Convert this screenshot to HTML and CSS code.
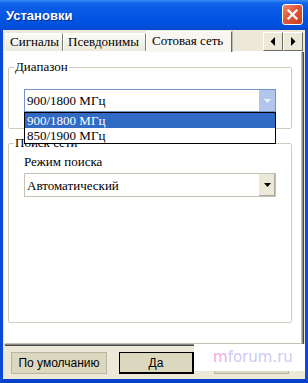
FILE: index.html
```html
<!DOCTYPE html>
<html>
<head>
<meta charset="utf-8">
<link rel="stylesheet" href="styles.css">
</head>
<body>
<div class="window">
  <div class="titlebar">
    <span class="title">Установки</span>
    <span class="close"><svg width="13" height="13" viewBox="0 0 13 13"><path d="M2.5 2.5 L10.5 10.5 M10.5 2.5 L2.5 10.5" stroke="#fff" stroke-width="2.2" stroke-linecap="square"/></svg></span>
  </div>
  <div class="frame">
    <div class="tabs">
      <div class="tab t1">Сигналы</div>
      <div class="tab t2">Псевдонимы</div>
      <div class="tab sel">Сотовая сеть</div>
      <div class="scroll">
        <div class="sbtn"><svg width="6" height="9" viewBox="0 0 6 9"><path d="M5 0 L5 9 L0.5 4.5 Z" fill="#000"/></svg></div>
        <div class="sbtn"><svg width="6" height="9" viewBox="0 0 6 9"><path d="M1 0 L1 9 L5.5 4.5 Z" fill="#000"/></svg></div>
      </div>
    </div>
    <div class="panel">
      <div class="group g1">
        <span class="legend">Диапазон</span>
        <div class="combo focused">
          <span class="value">900/1800 МГц</span>
          <span class="drop blue"><svg width="7" height="4" viewBox="0 0 7 4"><path d="M0 0 L7 0 L3.5 4 Z" fill="#eef2fa"/></svg></span>
          <div class="list">
            <div class="item selected">900/1800 МГц</div>
            <div class="item">850/1900 МГц</div>
          </div>
        </div>
      </div>
      <div class="group g2">
        <span class="legend">Поиск сети</span>
        <div class="label">Режим поиска</div>
        <div class="combo plain">
          <span class="value">Автоматический</span>
          <span class="drop beige"><svg width="7" height="4" viewBox="0 0 7 4"><path d="M0 0 L7 0 L3.5 4 Z" fill="#000"/></svg></span>
        </div>
      </div>
    </div>
    <div class="buttons">
      <div class="btn b1">По умолчанию</div>
      <div class="btn b2">Да</div>
      <div class="btn b3"></div>
    </div>
    <div class="watermark"><span class="wm-m">m</span>forum.ru</div>
  </div>
</div>
</body>
</html>
```
FILE: styles.css
```css
html, body {
  margin: 0;
  padding: 0;
  background: #ffffff;
}
.window {
  width: 308px;
  height: 383px;
  display: flex;
  flex-direction: column;
  overflow: hidden;
}
.titlebar {
  height: 30px;
  flex: none;
  display: flex;
  align-items: center;
  padding-left: 6px;
  position: relative;
  background: linear-gradient(to bottom, #3b8cf3 0px, #1266ea 3px, #0a5ce6 8px, #0055e3 18px, #0050dc 26px, #0a48cc 30px);
}
.title {
  font-family: "Liberation Sans", Arial, sans-serif;
  font-weight: bold;
  font-size: 13px;
  color: #ffffff;
  text-shadow: 1px 1px 0 #0a2a8c;
  margin-top: 1px;
}
.close {
  position: absolute;
  left: 282px;
  top: 4px;
  width: 21px;
  height: 21px;
  box-sizing: border-box;
  border: 1px solid #ffffff;
  border-radius: 3px;
  background: linear-gradient(135deg, #ee8a6c 0%, #e0583a 45%, #c8401e 100%);
  display: flex;
  align-items: center;
  justify-content: center;
}
.frame {
  flex: 1;
  position: relative;
  background: #ece9d8;
  border-left: 3px solid #0c4ad8;
  border-right: 3px solid #0c4ad8;
  border-bottom: 4px solid #0a3fcc;
  padding-left: 1px;
  display: flex;
  flex-direction: column;
}
.tabs {
  width: 299px;
  height: 21px;
  display: flex;
  align-items: flex-end;
  padding-left: 1px;
  box-sizing: border-box;
  position: relative;
  z-index: 2;
}
.tab {
  box-sizing: border-box;
  height: 18px;
  font-family: "Liberation Serif", "Times New Roman", serif;
  font-size: 13px;
  line-height: 15px;
  color: #000;
  padding-left: 4px;
  background: linear-gradient(to bottom, #fbfbf8, #ebe9dc);
  border-top: 1px solid #ffffff;
  border-left: 1px solid #ffffff;
  border-right: 1px solid #7c7c74;
  box-shadow: 1px 0 0 #bdbab0;
}
.t1 { width: 58px; }
.t2 { width: 83px; }
.sel {
  width: 86px;
  height: 21px;
  margin-bottom: -1px;
  padding-left: 5px;
  padding-top: 1px;
  background: #f7f6f0;
  border-right: 1px solid #6a6a64;
}
.scroll {
  margin-left: auto;
  display: flex;
  margin-bottom: 0px;
}
.sbtn {
  width: 20px;
  height: 19px;
  box-sizing: border-box;
  background: #ece9d8;
  border-top: 1px solid #ffffff;
  border-left: 1px solid #ffffff;
  border-right: 1px solid #6b6b64;
  border-bottom: 1px solid #6b6b64;
  display: flex;
  align-items: center;
  justify-content: center;
}
.panel {
  width: 299px;
  height: 294px;
  box-sizing: border-box;
  background: #ffffff;
  border-top: 1px solid #ffffff;
  border-left: 1px solid #ffffff;
  border-right: 1px solid #8a8a84;
  border-bottom: 1px solid #8a8a84;
  box-shadow: 1px 1px 0 #4a4a44, inset -1px -1px 0 #c4c1b4;
  padding: 15px 0 0 3px;
  display: flex;
  flex-direction: column;
  position: relative;
  z-index: 1;
}
.group {
  width: 284px;
  box-sizing: border-box;
  border: 1px solid #cfccbe;
  border-radius: 2px;
  display: flex;
  flex-direction: column;
  padding-left: 15px;
}
.g1 { height: 62px; position: relative; z-index: 3; }
.g2 { height: 180px; margin-top: 14px; }
.legend {
  align-self: flex-start;
  margin: -9px 0 0 -10px;
  padding: 0 1px;
  height: 15px;
  background: #ffffff;
  font-family: "Liberation Serif", "Times New Roman", serif;
  font-size: 13px;
  line-height: 15px;
  color: #000;
}
.label {
  margin-top: 4px;
  font-family: "Liberation Serif", "Times New Roman", serif;
  font-size: 13px;
  line-height: 15px;
  color: #000;
}
.combo {
  width: 252px;
  box-sizing: border-box;
  background: #ffffff;
  display: flex;
  align-items: stretch;
  position: relative;
  font-family: "Liberation Serif", "Times New Roman", serif;
  font-size: 13px;
  color: #000;
}
.focused {
  height: 23px;
  margin-top: 15px;
  border: 1px solid #7393c8;
}
.plain {
  height: 24px;
  margin-top: 4px;
  border: 1px solid #c5c2b6;
}
.value {
  flex: 1;
  padding-left: 2px;
  display: flex;
  align-items: center;
  padding-top: 1px;
}
.drop {
  width: 16px;
  display: flex;
  align-items: center;
  justify-content: center;
}
.blue {
  background: #b2c5ea;
}
.beige {
  background: #ece9d8;
  border-left: 1px solid #ffffff;
  box-shadow: inset -1px -1px 0 #aca899;
}
.list {
  position: absolute;
  left: -1px;
  top: 22px;
  width: 252px;
  height: 32px;
  box-sizing: border-box;
  border: 1px solid #000;
  background: #ffffff;
  z-index: 5;
}
.item {
  height: 15px;
  line-height: 15px;
  padding-left: 2px;
}
.selected {
  background: #316ac5;
  color: #ffffff;
}
.buttons {
  display: flex;
  margin-top: 7px;
  padding-left: 7px;
}
.btn {
  height: 22px;
  box-sizing: border-box;
  background: #dcd8c0;
  border: 1px solid #b9b5a2;
  font-family: "Liberation Sans", Arial, sans-serif;
  font-size: 12px;
  color: #000;
  display: flex;
  align-items: center;
  justify-content: center;
}
.b1 { width: 96px; }
.b2 {
  width: 75px;
  margin-left: 12px;
  border: 1px solid #000;
  border-right-width: 2px;
  border-bottom-width: 2px;
}
.b3 {
  width: 75px;
  margin-left: 20px;
}
.watermark {
  position: absolute;
  left: 191px;
  top: 314px;
  width: 111px;
  height: 27px;
  background: #ffffff;
  z-index: 6;
  font-family: "DejaVu Sans", sans-serif;
  font-size: 15px;
  line-height: 27px;
  color: #cfcaf2;
  padding-left: 19px;
  box-sizing: border-box;
}
.wm-m {
  color: #f2a8e6;
}
```
